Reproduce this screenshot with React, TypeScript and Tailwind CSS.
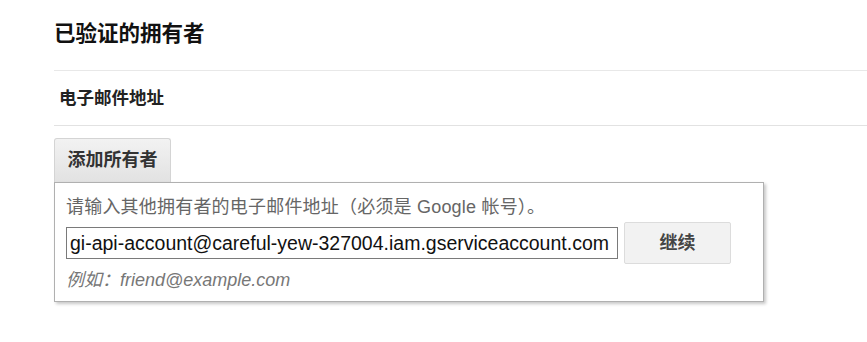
const FONT = "font-['Liberation_Sans','Noto_Sans_CJK_SC',sans-serif]";

const App = () => {
  return (
    <div className={`h-[342px] w-full bg-white pl-[54px] text-[#222] ${FONT}`}>
      <div className="flex h-[71px] items-center border-b border-[#e8e8e8] pb-[2px]">
        <h2 className="text-[21.5px] font-bold text-[#111]">已验证的拥有者</h2>
      </div>

      <div className="flex h-[55px] items-center border-b border-[#e2e2e2] pl-[5px]">
        <span className="text-[17.5px] font-bold text-[#222]">电子邮件地址</span>
      </div>

      <div className="pt-[12px]">
        <button className="flex h-[44px] w-[117px] items-center justify-center rounded-t-[3px] border border-b-0 border-[#d4d4d4] bg-gradient-to-b from-[#f2f2f2] to-[#e2e2e2] text-[18px] font-bold text-[#333]">
          添加所有者
        </button>

        <div className="h-[120px] w-[710px] border border-[#b0b0b0] bg-white pl-[11px] pt-[12px] shadow-[2px_2px_3px_rgba(0,0,0,0.22)]">
          <p className="text-[18px] leading-[24px] tracking-[0.2px] text-[#666]">
            请输入其他拥有者的电子邮件地址（必须是 Google 帐号）。
          </p>
          <div className="mt-[3px] flex items-center gap-[6px]">
            <input
              className="h-[32px] w-[552px] border border-[#7a7a7a] px-[3px] text-[19.5px] text-[#111] outline-none"
              defaultValue="gi-api-account@careful-yew-327004.iam.gserviceaccount.com"
            />
            <button className="flex h-[42px] w-[107px] items-center justify-center rounded-[2px] border border-[#dcdcdc] bg-[#f2f2f2] text-[18px] font-bold text-[#444]">
              继续
            </button>
          </div>
          <p className="mt-[4px] text-[18px] italic leading-[24px] text-[#777]">
            例如：friend@example.com
          </p>
        </div>
      </div>
    </div>
  );
};

export default App;
